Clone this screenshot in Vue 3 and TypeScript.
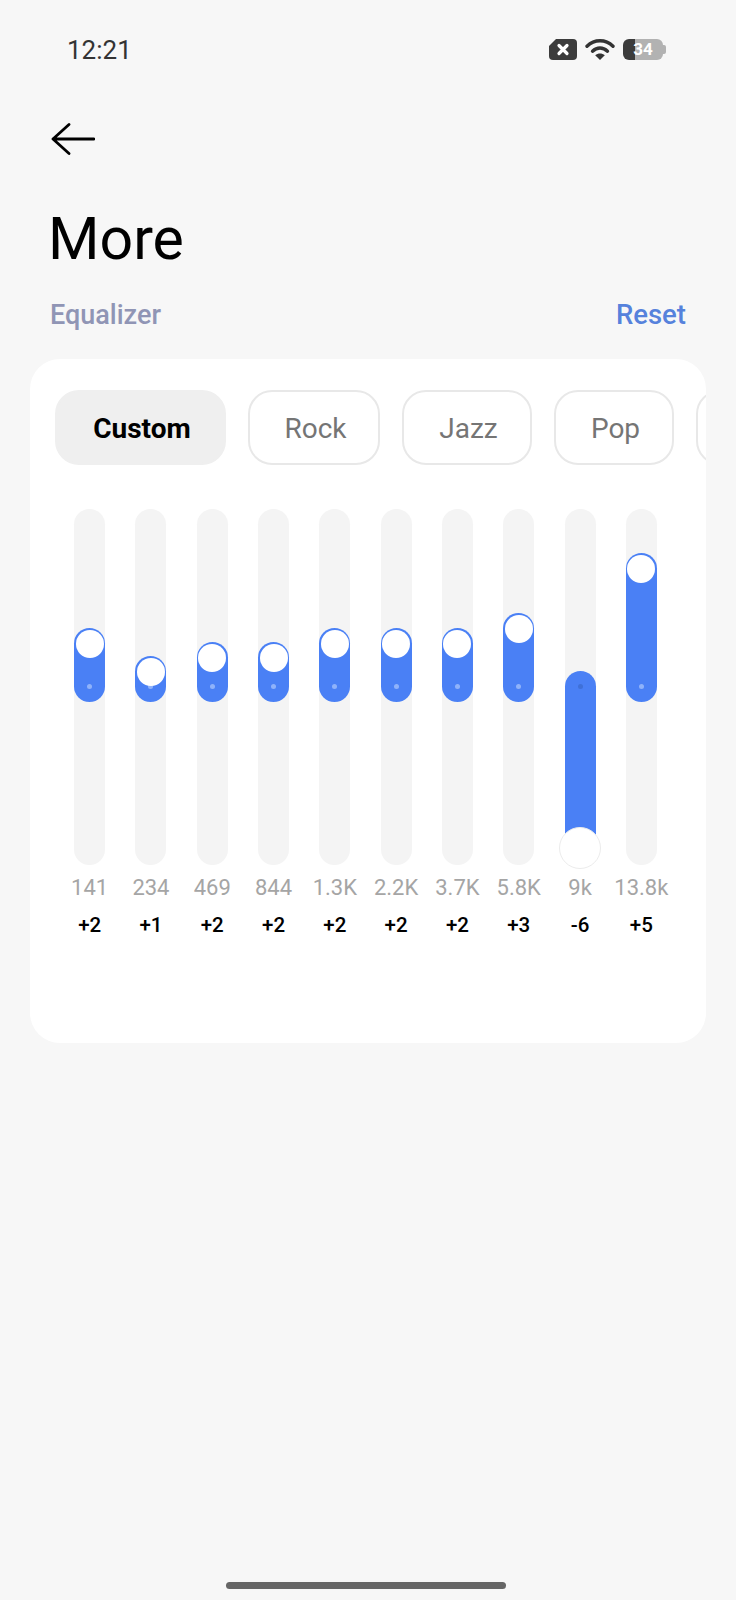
<script setup lang="ts">
interface Band {
  freq: string
  gain: string
  top: number
  bottom: number
  low?: boolean
}

const presets: string[] = ['Custom', 'Rock', 'Jazz', 'Pop', '']

const bands: Band[] = [
  { freq: '141', gain: '+2', top: 119, bottom: 163 },
  { freq: '234', gain: '+1', top: 147, bottom: 163 },
  { freq: '469', gain: '+2', top: 133, bottom: 163 },
  { freq: '844', gain: '+2', top: 133, bottom: 163 },
  { freq: '1.3K', gain: '+2', top: 119, bottom: 163 },
  { freq: '2.2K', gain: '+2', top: 119, bottom: 163 },
  { freq: '3.7K', gain: '+2', top: 119, bottom: 163 },
  { freq: '5.8K', gain: '+3', top: 104, bottom: 163 },
  { freq: '9k', gain: '-6', top: 162, bottom: 16, low: true },
  { freq: '13.8k', gain: '+5', top: 44, bottom: 163 }
]
</script>

<template>
  <div class="page">
    <header class="status">
      <span class="time">12:21</span>
      <div class="status-icons">
        <svg class="ic-x" width="28" height="21" viewBox="0 0 28 21">
          <path d="M7 0H24a4 4 0 0 1 4 4V17a4 4 0 0 1-4 4H4a4 4 0 0 1-4-4V7Z" fill="#3c3c3c" />
          <path d="M10 6.500l8 8M18 6.500l-8 8" stroke="#fff" stroke-width="3.200" stroke-linecap="round" />
        </svg>
        <svg class="ic-wifi" width="30" height="22" viewBox="0 0 30 22">
          <path d="M2 8.200C9.500 1 20.500 1 28 8.200" fill="none" stroke="#333" stroke-width="3.400" stroke-linecap="round" />
          <path d="M7.500 13.200C12 9 18 9 22.500 13.200" fill="none" stroke="#333" stroke-width="3.400" stroke-linecap="round" />
          <path d="M10.200 17.200C13 15 17 15 19.800 17.200L15 22Z" fill="#333" />
        </svg>
        <div class="battery">34</div>
      </div>
    </header>

    <nav class="nav">
      <svg width="44" height="32" viewBox="0 0 44 32">
        <path d="M43 16H2M18 1.500 2 16 18 30.500" fill="none" stroke="#000" stroke-width="2.800" stroke-linecap="round" stroke-linejoin="round" />
      </svg>
    </nav>

    <h1 class="title">More</h1>

    <div class="section">
      <span class="section-name">Equalizer</span>
      <span class="reset">Reset</span>
    </div>

    <main class="card">
      <div class="presets">
        <div
          v-for="(p, i) in presets"
          :key="i"
          class="preset"
          :class="['preset-' + i, { active: i === 0 }]"
        >{{ p }}</div>
      </div>

      <div class="bands">
        <div v-for="b in bands" :key="b.freq" class="band">
          <div class="track">
            <div class="fill" :style="{ top: b.top + 'px', bottom: b.bottom + 'px' }"></div>
            <span class="dot" :class="{ 'dot-dark': b.low }"></span>
            <span
              v-if="!b.low"
              class="knob"
              :style="{ top: b.top + 1.500 + 'px' }"
            ></span>
            <span v-else class="knob knob-big"></span>
          </div>
          <div class="freq">{{ b.freq }}</div>
          <div class="gain">{{ b.gain }}</div>
        </div>
      </div>
    </main>

    <div class="home-bar"></div>
  </div>
</template>

<style>
html,
body {
  margin: 0;
  background: #f7f7f7;
}
</style>

<style scoped>
.page {
  position: relative;
  width: 736px;
  height: 1600px;
  background: #f7f7f7;
  font-family: Roboto, "Liberation Sans", sans-serif;
  overflow: hidden;
}

.status {
  height: 100px;
  padding: 0 73px 0 67px;
  display: flex;
  align-items: center;
  justify-content: space-between;
  box-sizing: border-box;
}

.time {
  font-size: 26px;
  color: #333;
}

.status-icons {
  display: flex;
  align-items: center;
  margin-bottom: 2px;
}

.ic-x {
  display: block;
  margin-right: 8px;
}

.ic-wifi {
  display: block;
  margin-right: 8px;
}

.battery {
  position: relative;
  width: 40px;
  height: 21px;
  border-radius: 6px;
  background: linear-gradient(to right, #3c3c3c 0 12px, #b2b2b2 12px);
  color: #fff;
  font-size: 17px;
  font-weight: 700;
  line-height: 21px;
  text-align: center;
}

.battery::after {
  content: "";
  position: absolute;
  right: -3px;
  top: 6px;
  width: 3px;
  height: 9px;
  border-radius: 0 2px 2px 0;
  background: #b2b2b2;
}

.nav {
  height: 32px;
  margin-top: 23px;
  padding-left: 51px;
}

.nav svg {
  display: block;
}

.title {
  margin: 49px 0 0 48px;
  font-size: 59px;
  font-weight: 400;
  line-height: 70px;
  color: #000;
}

.section {
  margin-top: 25px;
  padding: 0 50px;
  display: flex;
  justify-content: space-between;
  font-size: 27.500px;
  font-weight: 500;
  line-height: 32px;
}

.section-name {
  font-size: 27px;
  color: #9095b5;
}

.reset {
  color: #5682dc;
}

.card {
  margin: 28px 30px 0;
  height: 684px;
  box-sizing: border-box;
  padding-top: 31px;
  border-radius: 30px;
  background: #fff;
  overflow: hidden;
}

.presets {
  display: flex;
  padding-left: 25px;
  gap: 22px;
}

.preset {
  flex: none;
  height: 75px;
  box-sizing: border-box;
  padding-left: 3px;
  border: 2px solid #e8e8e8;
  border-radius: 24px;
  font-size: 28px;
  line-height: 73px;
  text-align: center;
  color: #757575;
  background: #fff;
}

.preset.active {
  border-color: #efefef;
  background: #efefef;
  color: #000;
  font-weight: 700;
}

.preset-0 { width: 171px; }
.preset-1 { width: 132px; }
.preset-2 { width: 130px; }
.preset-3 { width: 120px; }
.preset-4 { width: 120px; }

.bands {
  margin-top: 44px;
  padding-left: 29px;
  display: grid;
  grid-template-columns: repeat(10, 61.3px);
}

.band {
  display: flex;
  flex-direction: column;
  align-items: center;
}

.track {
  position: relative;
  width: 31px;
  height: 356px;
  border-radius: 15.500px;
  background: #f4f4f4;
}

.fill {
  position: absolute;
  left: 0;
  right: 0;
  border-radius: 15.500px;
  background: #4a80f5;
}

.dot {
  position: absolute;
  left: 13px;
  top: 175px;
  width: 5px;
  height: 5px;
  border-radius: 50%;
  background: #8fb2fa;
}

.dot-dark {
  background: #3f70d8;
}

.knob {
  position: absolute;
  left: 1.500px;
  width: 28px;
  height: 28px;
  border-radius: 50%;
  background: #fff;
}

.knob-big {
  left: -5.500px;
  top: 318px;
  width: 42px;
  height: 42px;
  box-sizing: border-box;
  border: 1px solid #ececec;
}

.freq {
  margin-top: 5px;
  font-size: 22px;
  line-height: 36px;
  color: #a5a5a5;
  white-space: nowrap;
}

.gain {
  margin-top: 1px;
  font-size: 20.500px;
  font-weight: 500;
  line-height: 37px;
  color: #000;
}

.home-bar {
  position: absolute;
  left: 226px;
  top: 1582px;
  width: 280px;
  height: 7px;
  border-radius: 4px;
  background: #666;
}
</style>
